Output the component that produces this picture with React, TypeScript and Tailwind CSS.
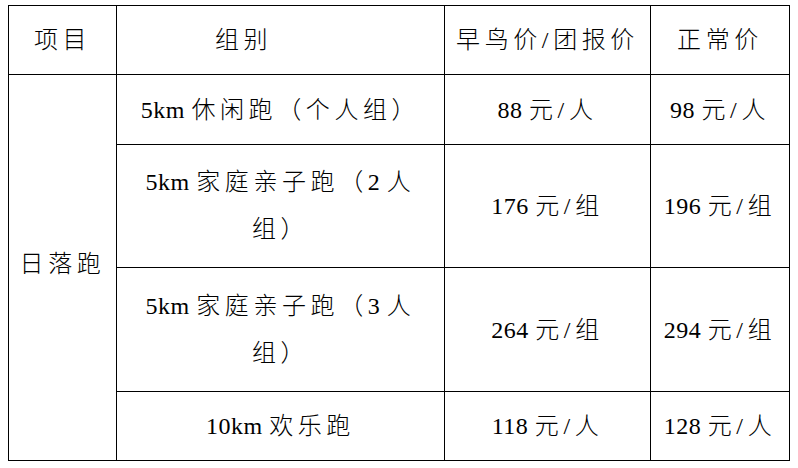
import React from "react";

const font = { fontFamily: '"Liberation Serif", "Times New Roman", "DejaVu Serif", "Noto Sans CJK SC", serif' };

function Txt({ s }: { s: string }) {
  const parts = s.match(/[0-9a-zA-Z ]+|[^0-9a-zA-Z ]+/g) || [];
  return (
    <span>
      {parts.map((p, i) =>
        /^[0-9a-zA-Z ]+$/.test(p) ? (
          <span key={i} className="tracking-[0.5px] font-normal">{p}</span>
        ) : (
          <span key={i} className="tracking-[4.6px] font-light">{p}</span>
        )
      )}
    </span>
  );
}

function Cell({ children, className = "" }: { children: React.ReactNode; className?: string }) {
  return (
    <div className={"bg-white flex items-center justify-center text-center text-black text-[24px] " + className}>
      {children}
    </div>
  );
}

export default function App() {
  return (
    <div className="w-[798px] h-[468px] bg-white" style={font}>
      <div className="ml-[8px] pt-[5px]">
        <div className="inline-grid bg-black p-px gap-px grid-cols-[107px_327px_205px_138px] grid-rows-[68px_69px_122px_123px_68px]">
          <Cell><Txt s="项目" /></Cell>
          <Cell className="pr-[74px]"><Txt s="组别" /></Cell>
          <Cell><Txt s="早鸟价/团报价" /></Cell>
          <Cell><Txt s="正常价" /></Cell>

          <Cell className="row-span-4 pb-[8px]"><Txt s="日落跑" /></Cell>
          <Cell><Txt s="5km 休闲跑（个人组）" /></Cell>
          <Cell><Txt s="88 元/人" /></Cell>
          <Cell><Txt s="98 元/人" /></Cell>

          <Cell className="flex-col leading-[47px]">
            <Txt s="5km 家庭亲子跑（2 人" />
            <Txt s="组）" />
          </Cell>
          <Cell><Txt s="176 元/组" /></Cell>
          <Cell><Txt s="196 元/组" /></Cell>

          <Cell className="flex-col leading-[47px]">
            <Txt s="5km 家庭亲子跑（3 人" />
            <Txt s="组）" />
          </Cell>
          <Cell><Txt s="264 元/组" /></Cell>
          <Cell><Txt s="294 元/组" /></Cell>

          <Cell><Txt s="10km 欢乐跑" /></Cell>
          <Cell><Txt s="118 元/人" /></Cell>
          <Cell><Txt s="128 元/人" /></Cell>
        </div>
      </div>
    </div>
  );
}
